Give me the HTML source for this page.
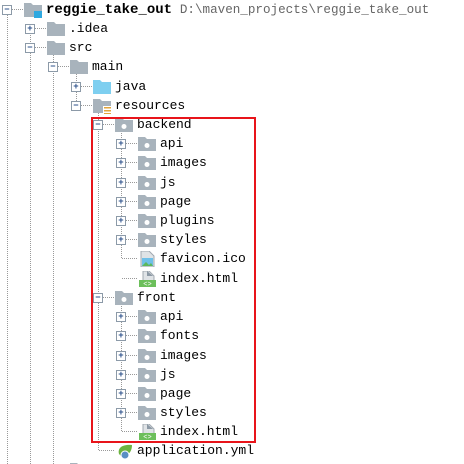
<!DOCTYPE html>
<html><head><meta charset="utf-8"><style>
html,body{margin:0;padding:0;background:#fff;width:464px;height:464px;overflow:hidden;position:relative;font-family:"Liberation Mono",monospace;}
.r{position:absolute;left:0;height:19px;width:464px}
.t{position:absolute;top:5px;left:calc(var(--x) - 5px);width:8px;height:8px;border:1px solid #8c9aa8;background:#fff;font-size:9px;line-height:8px;text-align:center;color:#2a4f8a;font-weight:bold;z-index:2}
.h{position:absolute;top:9px;left:calc(var(--x) + 4px);width:12px;border-top:1px dotted #999}
.i{position:absolute;top:2px;left:calc(var(--x) + 17px);width:18px;height:16px}
.n{position:absolute;top:0;left:calc(var(--x) + 39px);font-size:13px;line-height:19px;color:#000;white-space:pre}
.v{position:absolute;width:0;border-left:1px dotted #999}
.box{position:absolute;left:91px;top:117px;width:161px;height:322px;border:2px solid #e8141a}
</style></head><body>
<svg width="0" height="0" style="position:absolute"><defs>
<g id="f"><path d="M0 1h7l2 2h9v12H0z" fill="#a8b3bc"/></g>
<g id="d"><path d="M0 1h7l2 2h9v12H0z" fill="#a8b3bc"/><circle cx="9" cy="9.5" r="2.5" fill="#fff"/></g>
<g id="b"><path d="M0 1h7l2 2h9v12H0z" fill="#7ecff0"/></g>
<g id="rs"><path d="M0 1h7l2 2h9v12H0z" fill="#a8b3bc"/><rect x="10" y="8" width="8" height="8" fill="#fff"/><rect x="11" y="9" width="7" height="1.5" fill="#e3a53a"/><rect x="11" y="12" width="7" height="1.5" fill="#e3a53a"/><rect x="11" y="15" width="7" height="1" fill="#e3a53a"/></g>
<g id="p"><path d="M0 1h7l2 2h9v12H0z" fill="#a8b3bc"/><rect x="10" y="9" width="8" height="7" fill="#2ea8e0"/></g>
<g id="im"><path d="M3 0h8l5 5v11H3z" fill="#dfe3e6" stroke="#a0a8b0"/><rect x="4" y="7" width="11" height="8" fill="#6fc0e8"/><path d="M4 15l4-4 3 3 2-2 2 3z" fill="#5cb85c"/></g>
<g id="ht"><path d="M5 0h6l5 5v5H5z" fill="#dfe3e6" stroke="#a0a8b0"/><path d="M9 0v5h6" fill="#8c99a5"/><rect x="1" y="9" width="17" height="7" fill="#6cbf5b"/><text x="9.5" y="15" font-size="7" font-family="Liberation Mono" text-anchor="middle" fill="#fff">&lt;&gt;</text></g>
<g id="y"><path d="M4 11C2 4 9 1 17 2c0 7-4 11-11 11z" fill="#6cb33f"/><circle cx="10" cy="12" r="4" fill="#5a8fc4" stroke="#fff"/></g>
</defs></svg>

<div class="v" style="left:7px;top:14px;height:450px"></div>
<div class="v" style="left:30px;top:33px;height:431px"></div>
<div class="v" style="left:53px;top:52px;height:412px"></div>
<div class="v" style="left:76px;top:71px;height:34px"></div>
<div class="v" style="left:98px;top:110px;height:340px"></div>
<div class="v" style="left:121px;top:129px;height:129px"></div>
<div class="v" style="left:121px;top:302px;height:129px"></div>

<div class="r" style="top:0;--x:7px"><div class="t">−</div><div class="h"></div><svg class="i"><use href="#p"/></svg><div class="n"><b style="font-size:14px">reggie_take_out</b> <span style="color:#666;font-size:12.6px">D:\maven_projects\reggie_take_out</span></div></div>
<div class="r" style="top:19px;--x:30px"><div class="t">+</div><div class="h"></div><svg class="i"><use href="#f"/></svg><div class="n">.idea</div></div>
<div class="r" style="top:38px;--x:30px"><div class="t">−</div><div class="h"></div><svg class="i"><use href="#f"/></svg><div class="n">src</div></div>
<div class="r" style="top:57px;--x:53px"><div class="t">−</div><div class="h"></div><svg class="i"><use href="#f"/></svg><div class="n">main</div></div>
<div class="r" style="top:77px;--x:76px"><div class="t">+</div><div class="h"></div><svg class="i"><use href="#b"/></svg><div class="n">java</div></div>
<div class="r" style="top:96px;--x:76px"><div class="t">−</div><div class="h"></div><svg class="i"><use href="#rs"/></svg><div class="n">resources</div></div>
<div class="r" style="top:115px;--x:98px"><div class="t">−</div><div class="h"></div><svg class="i"><use href="#d"/></svg><div class="n">backend</div></div>
<div class="r" style="top:134px;--x:121px"><div class="t">+</div><div class="h"></div><svg class="i"><use href="#d"/></svg><div class="n">api</div></div>
<div class="r" style="top:153px;--x:121px"><div class="t">+</div><div class="h"></div><svg class="i"><use href="#d"/></svg><div class="n">images</div></div>
<div class="r" style="top:173px;--x:121px"><div class="t">+</div><div class="h"></div><svg class="i"><use href="#d"/></svg><div class="n">js</div></div>
<div class="r" style="top:192px;--x:121px"><div class="t">+</div><div class="h"></div><svg class="i"><use href="#d"/></svg><div class="n">page</div></div>
<div class="r" style="top:211px;--x:121px"><div class="t">+</div><div class="h"></div><svg class="i"><use href="#d"/></svg><div class="n">plugins</div></div>
<div class="r" style="top:230px;--x:121px"><div class="t">+</div><div class="h"></div><svg class="i"><use href="#d"/></svg><div class="n">styles</div></div>
<div class="r" style="top:249px;--x:121px"><div class="h" style="left:122px;width:15px"></div><svg class="i"><use href="#im"/></svg><div class="n">favicon.ico</div></div>
<div class="r" style="top:269px;--x:121px"><div class="h" style="left:122px;width:15px"></div><svg class="i"><use href="#ht"/></svg><div class="n">index.html</div></div>
<div class="r" style="top:288px;--x:98px"><div class="t">−</div><div class="h"></div><svg class="i"><use href="#d"/></svg><div class="n">front</div></div>
<div class="r" style="top:307px;--x:121px"><div class="t">+</div><div class="h"></div><svg class="i"><use href="#d"/></svg><div class="n">api</div></div>
<div class="r" style="top:326px;--x:121px"><div class="t">+</div><div class="h"></div><svg class="i"><use href="#d"/></svg><div class="n">fonts</div></div>
<div class="r" style="top:346px;--x:121px"><div class="t">+</div><div class="h"></div><svg class="i"><use href="#d"/></svg><div class="n">images</div></div>
<div class="r" style="top:365px;--x:121px"><div class="t">+</div><div class="h"></div><svg class="i"><use href="#d"/></svg><div class="n">js</div></div>
<div class="r" style="top:384px;--x:121px"><div class="t">+</div><div class="h"></div><svg class="i"><use href="#d"/></svg><div class="n">page</div></div>
<div class="r" style="top:403px;--x:121px"><div class="t">+</div><div class="h"></div><svg class="i"><use href="#d"/></svg><div class="n">styles</div></div>
<div class="r" style="top:422px;--x:121px"><div class="h" style="left:122px;width:15px"></div><svg class="i"><use href="#ht"/></svg><div class="n">index.html</div></div>
<div class="r" style="top:441px;--x:98px"><div class="h" style="left:99px;width:15px"></div><svg class="i"><use href="#y"/></svg><div class="n">application.yml</div></div>
<div class="r" style="top:460px;--x:53px"><svg class="i"><use href="#f"/></svg></div>

<div class="box"></div>
</body></html>
